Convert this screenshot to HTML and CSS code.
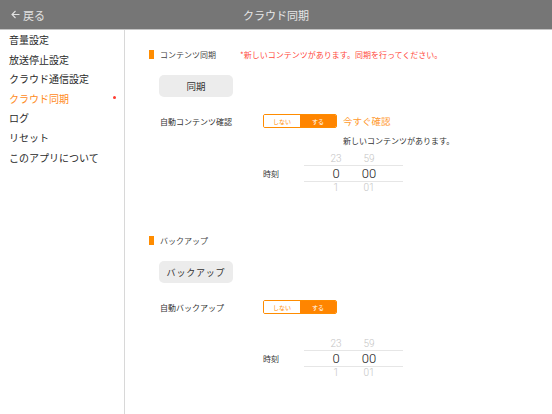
FILE: index.html
```html
<!DOCTYPE html>
<html lang="ja">
<head>
<meta charset="utf-8">
<link rel="stylesheet" href="styles.css">
</head>
<body>
<header class="topbar">
  <div class="back">
    <svg class="back-icon" width="9" height="9" viewBox="0 0 9 9"><path d="M8.5 4.5H1M4.5 1L1 4.5L4.5 8" fill="none" stroke="#e2e2e2" stroke-width="1.1"/></svg>
    <span>戻る</span>
  </div>
  <div class="title">クラウド同期</div>
</header>
<div class="main">
  <nav class="sidebar">
    <div class="nav-item">音量設定</div>
    <div class="nav-item">放送停止設定</div>
    <div class="nav-item">クラウド通信設定</div>
    <div class="nav-item active">クラウド同期<span class="dot"></span></div>
    <div class="nav-item">ログ</div>
    <div class="nav-item">リセット</div>
    <div class="nav-item">このアプリについて</div>
  </nav>
  <section class="content">
    <div class="sec-head first">
      <span class="bar"></span>
      <span class="sec-label">コンテンツ同期</span>
      <span class="alert">*新しいコンテンツがあります。同期を行ってください。</span>
    </div>
    <div class="btn">同期</div>
    <div class="row">
      <span class="row-label">自動コンテンツ確認</span>
      <div class="seg"><span class="seg-off">しない</span><span class="seg-on">する</span></div>
      <span class="check-now">今すぐ確認</span>
    </div>
    <div class="notice">新しいコンテンツがあります。</div>
    <div class="time-row first-picker">
      <span class="time-label">時刻</span>
      <div class="picker">
        <div class="pk-row pk-dim"><span>23</span><span>59</span></div>
        <div class="pk-row pk-sel"><span>0</span><span>00</span></div>
        <div class="pk-row pk-dim"><span>1</span><span>01</span></div>
      </div>
    </div>

    <div class="sec-head second">
      <span class="bar"></span>
      <span class="sec-label">バックアップ</span>
    </div>
    <div class="btn btn-lg">バックアップ</div>
    <div class="row">
      <span class="row-label">自動バックアップ</span>
      <div class="seg"><span class="seg-off">しない</span><span class="seg-on">する</span></div>
    </div>
    <div class="time-row second-picker">
      <span class="time-label">時刻</span>
      <div class="picker">
        <div class="pk-row pk-dim"><span>23</span><span>59</span></div>
        <div class="pk-row pk-sel"><span>0</span><span>00</span></div>
        <div class="pk-row pk-dim"><span>1</span><span>01</span></div>
      </div>
    </div>
  </section>
</div>
</body>
</html>
```
FILE: styles.css
```css
* { box-sizing: border-box; }
html, body { margin: 0; padding: 0; }
body {
  width: 552px;
  height: 414px;
  overflow: hidden;
  background: #fff;
  font-family: "Noto Sans CJK JP", "Noto Sans", sans-serif;
  font-weight: 400;
  color: #333;
}
.topbar {
  height: 30px;
  background: #767676;
  border-bottom: 1px solid #c4c4c4;
  display: flex;
  align-items: center;
  position: relative;
}
.back {
  display: flex;
  align-items: center;
  gap: 3px;
  padding-left: 11px;
  color: #e2e2e2;
  font-size: 11px;
}
.back-icon { display: block; }
.title {
  position: absolute;
  left: 0;
  right: 0;
  text-align: center;
  color: #e6e6e6;
  font-size: 11px;
  pointer-events: none;
}
.main {
  display: flex;
  height: 384px;
}
.sidebar {
  width: 125px;
  border-right: 1px solid #d8d8d8;
}
.nav-item {
  position: relative;
  height: 19.6px;
  line-height: 19.6px;
  padding-left: 9px;
  font-size: 10px;
  color: #2a2a2a;
}
.nav-item.active { color: #ff8a1c; }
.dot {
  position: absolute;
  left: 113px;
  top: 7px;
  width: 3px;
  height: 3px;
  border-radius: 50%;
  background: #ff3b30;
}
.content {
  flex: 1;
  padding-left: 24px;
  display: flex;
  flex-direction: column;
  align-items: flex-start;
}
.sec-head {
  display: flex;
  align-items: center;
  height: 9px;
}
.sec-head.first { margin-top: 20px; }
.sec-head.second { margin-top: 42px; }
.bar {
  width: 5px;
  height: 9px;
  background: #ff8c00;
}
.sec-label {
  margin-left: 6px;
  width: 80px;
  font-size: 8px;
  color: #444;
  white-space: nowrap;
}
.alert {
  font-size: 8px;
  color: #ff4a3d;
  white-space: nowrap;
}
.btn {
  margin-top: 16px;
  margin-left: 10px;
  width: 74px;
  height: 22px;
  border-radius: 5px;
  background: #ececec;
  display: flex;
  align-items: center;
  justify-content: center;
  font-size: 9.5px;
  color: #333;
}
.btn-lg { font-size: 9px; letter-spacing: 0.8px; }
.row {
  margin-top: 17px;
  display: flex;
  align-items: center;
  height: 14px;
}
.row-label {
  width: 114px;
  padding-left: 11px;
  font-size: 8px;
  color: #333;
  white-space: nowrap;
}
.seg {
  display: flex;
  width: 74px;
  height: 14px;
  border: 1px solid #ff8c00;
  border-radius: 2px;
  overflow: hidden;
}
.seg span {
  flex: 1;
  display: flex;
  align-items: center;
  justify-content: center;
  font-size: 6px;
}
.seg-off { background: #fff; color: #ff8c00; }
.seg-on { background: #ff8500; color: #fff; }
.check-now {
  margin-left: 6px;
  font-size: 9.5px;
  color: #ff9a30;
  white-space: nowrap;
}
.notice {
  margin-top: 7px;
  margin-left: 194px;
  font-size: 8px;
  color: #333;
  white-space: nowrap;
}
.time-row {
  display: flex;
  align-items: center;
  margin-left: 114px;
}
.first-picker { margin-top: 7px; }
.second-picker { margin-top: 24px; }
.time-label {
  width: 41px;
  font-size: 8px;
  color: #333;
}
.picker {
  width: 99px;
}
.pk-row {
  display: grid;
  grid-template-columns: 24px 24px;
  column-gap: 9px;
  padding-left: 20px;
  text-align: center;
  font-family: "Roboto", "Liberation Sans", sans-serif;
  font-weight: 300;
}
.pk-dim {
  height: 12px;
  line-height: 12px;
  font-size: 10px;
  color: #c4c4c4;
}
.pk-sel {
  height: 17px;
  line-height: 15px;
  font-size: 13px;
  color: #1a1a1a;
  border-top: 1px solid #e6e6e6;
  border-bottom: 1px solid #e6e6e6;
}
```
